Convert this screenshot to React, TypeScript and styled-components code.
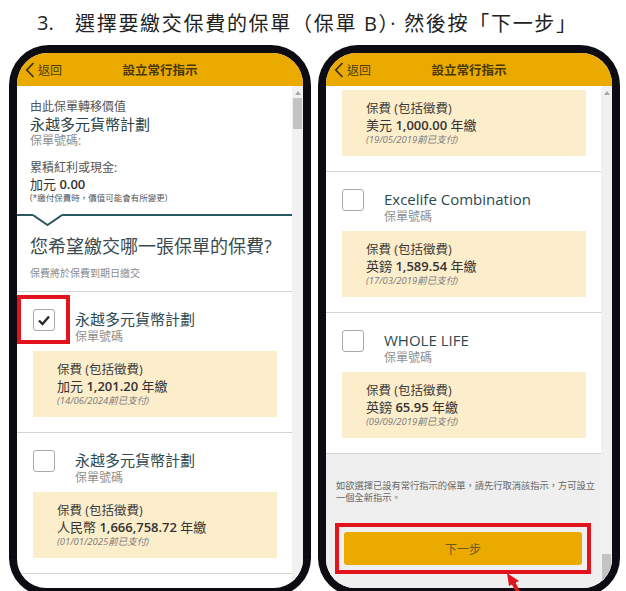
import React from "react";
import styled, { createGlobalStyle } from "styled-components";

const GlobalStyle = createGlobalStyle`
	html, body {
		margin: 0;
		padding: 0;
		overflow: hidden;
		background: #ffffff;
	}
`;

const FONT = `"Open Sans", "Noto Sans CJK TC", sans-serif`;
const YELLOW = "#EAAA00";
const RED = "#E2131C";

const Page = styled.div`
	position: relative;
	width: 626px;
	height: 591px;
	overflow: hidden;
	font-family: ${FONT};
	color: #333;
`;

const Heading = styled.h1`
	margin: 0;
	height: 45px;
	padding-left: 37px;
	display: flex;
	align-items: center;
	font-size: 20px;
	font-weight: 400;
	color: #222;
	letter-spacing: 1.7px;
	white-space: nowrap;
`;

const StepNo = styled.span`
	width: 38px;
	letter-spacing: 0;
`;

const PhoneRow = styled.div`
	display: flex;
	gap: 7px;
	padding-left: 9px;
`;

const Phone = styled.div<{ $w: number }>`
	box-sizing: border-box;
	width: ${(p) => p.$w}px;
	height: 551px;
	padding: 8px;
	background: #0c0c12;
	border-radius: 40px 40px 38px 38px;
`;

const Screen = styled.div`
	height: 100%;
	display: flex;
	flex-direction: column;
	border-radius: 31px 31px 29px 29px;
	overflow: hidden;
	background: #ffffff;
`;

const AppBar = styled.div`
	flex: none;
	height: 33px;
	display: grid;
	grid-template-columns: 1fr auto 1fr;
	align-items: center;
	background: ${YELLOW};
	color: #4d3d0c;
`;

const Back = styled.div`
	display: flex;
	align-items: center;
	gap: 3px;
	padding-left: 8px;
	font-size: 12px;
`;

const BarTitle = styled.div`
	font-size: 12.5px;
	font-weight: 700;
	color: #47380a;
`;

const Body = styled.div`
	flex: 1;
	min-height: 0;
	display: flex;
`;

const Content = styled.div`
	flex: 1;
	min-width: 0;
	display: flex;
	flex-direction: column;
	overflow: hidden;
`;

const Track = styled.div`
	flex: none;
	width: 11px;
	display: flex;
	flex-direction: column;
	align-items: center;
	padding-top: 5px;
	box-sizing: border-box;
	background: #f1f1f1;
`;

const TrackArrow = styled.div`
	width: 0;
	height: 0;
	border-left: 3px solid transparent;
	border-right: 3px solid transparent;
	border-bottom: 4px solid #a8a8a8;
`;

const Thumb = styled.div<{ $atEnd?: boolean }>`
	width: 9px;
	height: 31px;
	background: #c3c3c3;
	margin-top: ${(p) => (p.$atEnd ? "auto" : "3px")};
	margin-bottom: ${(p) => (p.$atEnd ? "3px" : "0")};
`;

const Intro = styled.div`
	padding: 12px 13px 0;
`;

const Label = styled.div<{ $mt?: number }>`
	font-size: 12px;
	line-height: 17px;
	color: #555;
	margin-top: ${(p) => p.$mt ?? 0}px;
`;

const PlanTitle = styled.div`
	font-size: 15px;
	line-height: 19px;
	color: #2c4449;
`;

const Muted = styled.div<{ $size?: number; $lh?: number }>`
	font-size: ${(p) => p.$size ?? 12}px;
	line-height: ${(p) => p.$lh ?? 14}px;
	color: #8e8e8e;
`;

const Value = styled.div`
	font-size: 13px;
	line-height: 16px;
	color: #333;
`;

const Num = styled.span`
	font-weight: 600;
`;

const Note = styled.div`
	font-size: 8.5px;
	line-height: 11px;
	color: #555;
`;

const Divider = styled.div`
	display: flex;
	align-items: flex-start;
	height: 12px;
	margin-top: 11px;
`;

const DividerLine = styled.div<{ $grow?: boolean }>`
	height: 2px;
	background: #2b5664;
	width: 16px;
	flex: ${(p) => (p.$grow ? 1 : "none")};
`;

const Question = styled.div`
	margin-top: 9px;
	padding: 0 13px;
	font-size: 18px;
	line-height: 22px;
	color: #3a4a4f;
	white-space: nowrap;
`;

const SubNote = styled.div`
	margin-top: 9px;
	padding: 0 13px;
	font-size: 10px;
	line-height: 14px;
	color: #8a8a8a;
`;

const List = styled.div<{ $mt?: number }>`
	margin-top: ${(p) => p.$mt ?? 0}px;
`;

const Item = styled.div<{ $head?: boolean }>`
	position: relative;
	border-top: ${(p) => (p.$head ? "none" : "1px solid #d4d4d4")};
	padding: ${(p) => (p.$head ? "4px" : "17px")} 15px 15px 16px;
`;

const ItemHead = styled.div`
	display: flex;
	align-items: flex-start;
	gap: 20px;
`;

const Check = styled.div`
	flex: none;
	width: 22px;
	height: 22px;
	box-sizing: border-box;
	border: 1px solid #a9a9a9;
	border-radius: 3px;
	display: flex;
	align-items: center;
	justify-content: center;
	background: #fff;
`;

const ItemName = styled.div`
	font-size: 15px;
	line-height: 20px;
	color: #2c4a50;
`;

const Premium = styled.div<{ $mt?: number }>`
	margin-top: ${(p) => p.$mt ?? 6}px;
	padding: 11px 8px 9px 24px;
	background: #fcedcb;
`;

const PremiumLabel = styled.div`
	font-size: 12.5px;
	line-height: 16px;
	color: #3a3a3a;
`;

const PremiumAmount = styled.div`
	font-size: 13px;
	line-height: 16px;
	color: #333;
`;

const PaidNote = styled.div`
	font-size: 9.5px;
	line-height: 14px;
	font-style: italic;
	color: #7b7b7b;
`;

const Highlight = styled.div`
	position: absolute;
	left: 0;
	top: 3px;
	width: 53px;
	height: 49px;
	box-sizing: border-box;
	border: 4px solid ${RED};
`;

const Footer = styled.div`
	flex: 1;
	background: #efefef;
	border-top: 1px solid #d4d4d4;
	padding: 26px 4px 0 10px;
`;

const FooterText = styled.div`
	font-size: 9.25px;
	line-height: 12px;
	color: #666;
	white-space: nowrap;
`;

const ButtonFrame = styled.div`
	margin: 19px 6px 0 -1px;
	padding: 5px;
	border: 4px solid ${RED};
`;

const NextButton = styled.div`
	height: 33px;
	border-radius: 3px;
	background: ${YELLOW};
	display: flex;
	align-items: center;
	justify-content: center;
	font-size: 12px;
	color: #6a5622;
`;

const Arrow = styled.svg`
	position: absolute;
	left: 496px;
	top: 572px;
`;

const Chevron = () => (
	<svg width="10" height="16" viewBox="0 0 10 16">
		<polyline points="8.5,1 1.8,8 8.5,15" fill="none" stroke="#3f3208" strokeWidth="1.8" />
	</svg>
);

const Tick = () => (
	<svg width="14" height="12" viewBox="0 0 14 12">
		<path d="M2 6.5 L5.5 10 L12 2.5" fill="none" stroke="#2a2a2a" strokeWidth="2.4" />
	</svg>
);

const Header = () => (
	<AppBar>
		<Back>
			<Chevron />
			返回
		</Back>
		<BarTitle>設立常行指示</BarTitle>
		<div />
	</AppBar>
);

type Policy = {
	name?: string;
	currency: string;
	amount: string;
	paid: string;
	checked?: boolean;
	marked?: boolean;
};

const PolicyItem: React.FC<{ policy: Policy; head?: boolean }> = ({ policy, head }) => (
	<Item $head={head}>
		{policy.name && (
			<ItemHead>
				<Check>{policy.checked && <Tick />}</Check>
				<div>
					<ItemName>{policy.name}</ItemName>
					<Muted $size={12} $lh={16}>
						保單號碼
					</Muted>
				</div>
			</ItemHead>
		)}
		<Premium $mt={policy.name ? 6 : 0}>
			<PremiumLabel>保費 (包括徵費)</PremiumLabel>
			<PremiumAmount>
				{policy.currency} <Num>{policy.amount}</Num> 年繳
			</PremiumAmount>
			<PaidNote>({policy.paid}前已支付)</PaidNote>
		</Premium>
		{policy.marked && <Highlight />}
	</Item>
);

const leftPolicies: Policy[] = [
	{ name: "永越多元貨幣計劃", currency: "加元", amount: "1,201.20", paid: "14/06/2024", checked: true, marked: true },
	{ name: "永越多元貨幣計劃", currency: "人民幣", amount: "1,666,758.72", paid: "01/01/2025" },
	{ name: "永越多元貨幣計劃", currency: "美元", amount: "1,000.00", paid: "19/05/2019" },
];

const rightPolicies: Policy[] = [
	{ name: "Excelife Combination", currency: "英鎊", amount: "1,589.54", paid: "17/03/2019" },
	{ name: "WHOLE LIFE", currency: "英鎊", amount: "65.95", paid: "09/09/2019" },
];

export default function App() {
	return (
		<Page>
			<GlobalStyle />
			<Heading>
				<StepNo>3.</StepNo>
				選擇要繳交保費的保單（保單 B）· 然後按「下一步」
			</Heading>
			<PhoneRow>
				<Phone $w={302}>
					<Screen>
						<Header />
						<Body>
							<Content>
								<Intro>
									<Label>由此保單轉移價值</Label>
									<PlanTitle>永越多元貨幣計劃</PlanTitle>
									<Muted>保單號碼:</Muted>
									<Label $mt={11}>累積紅利或現金:</Label>
									<Value>
										加元 <Num>0.00</Num>
									</Value>
									<Note>(*繳付保費時，價值可能會有所變更)</Note>
								</Intro>
								<Divider>
									<DividerLine />
									<svg width="29" height="12" viewBox="0 0 29 12">
										<polyline points="0,1 14.5,11 29,1" fill="none" stroke="#2b5664" strokeWidth="2" />
									</svg>
									<DividerLine $grow />
								</Divider>
								<Question>您希望繳交哪一張保單的保費?</Question>
								<SubNote>保費將於保費到期日繳交</SubNote>
								<List $mt={11}>
									{leftPolicies.map((p, i) => (
										<PolicyItem key={i} policy={p} />
									))}
								</List>
							</Content>
							<Track>
								<TrackArrow />
								<Thumb />
							</Track>
						</Body>
					</Screen>
				</Phone>
				<Phone $w={302}>
					<Screen>
						<Header />
						<Body>
							<Content>
								<List>
									<PolicyItem head policy={{ currency: "美元", amount: "1,000.00", paid: "19/05/2019" }} />
									{rightPolicies.map((p, i) => (
										<PolicyItem key={i} policy={p} />
									))}
								</List>
								<Footer>
									<FooterText>
										如欲選擇已設有常行指示的保單，請先行取消該指示，方可設立
										<br />
										一個全新指示。
									</FooterText>
									<ButtonFrame>
										<NextButton>下一步</NextButton>
									</ButtonFrame>
								</Footer>
							</Content>
							<Track>
								<TrackArrow />
								<Thumb $atEnd />
							</Track>
						</Body>
					</Screen>
				</Phone>
			</PhoneRow>
			<Arrow width="32" height="24" viewBox="0 0 32 24">
				<polygon points="11,1 23,9 13,14" fill={RED} />
				<line x1="17" y1="10" x2="24" y2="24" stroke={RED} strokeWidth="4" />
			</Arrow>
		</Page>
	);
}
